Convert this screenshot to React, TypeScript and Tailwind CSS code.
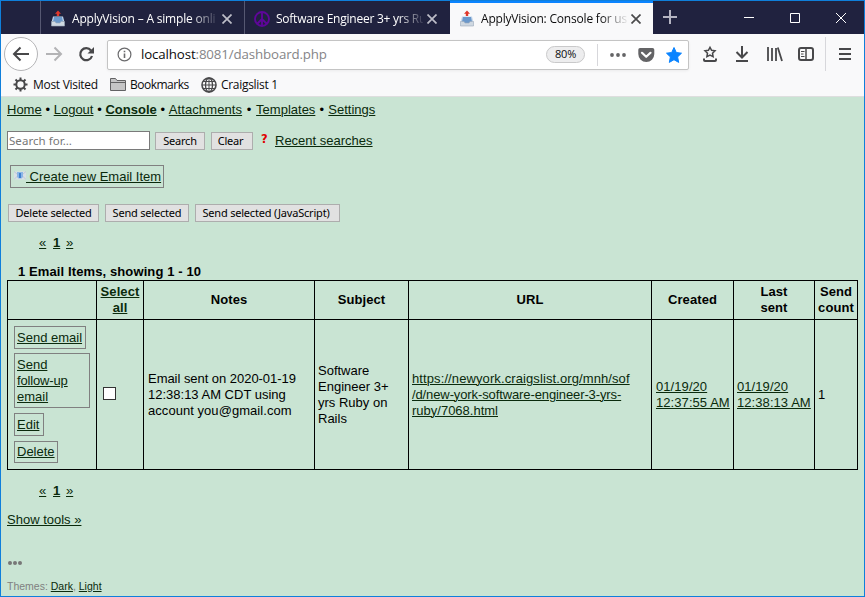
import React from "react";

const UI = "font-['Open_Sans','Noto_Sans',sans-serif]";

function OutboxIcon() {
  return (
    <svg width="14" height="17" viewBox="0 0 14 17" className="shrink-0">
      <path d="M2 6.500h10l1.300 5H.7z" fill="#c3d6ea" />
      <path d="M3 7h8l1 5-2 1.500H4L2 12z" fill="#6a98cb" />
      <path d="M.5 11.500h3.500l1 1.500h4l1-1.500h3.500V16H.5z" fill="#cfd8e1" stroke="#9aa9ba" strokeWidth=".6" />
      <path d="M7 .5l3 3.200H8.200V6H5.800V3.700H4z" fill="#e0372b" />
    </svg>
  );
}

function PeaceIcon() {
  return (
    <svg width="16" height="16" viewBox="0 0 16 16" className="shrink-0" fill="none" stroke="#5e0699" strokeWidth="1.900">
      <circle cx="8" cy="8" r="7" />
      <path d="M8 1v14M8 8l-5 5M8 8l5 5" />
    </svg>
  );
}

function CloseIcon({ color }: { color: string }) {
  return (
    <svg width="10" height="10" viewBox="0 0 10 10" className="shrink-0" stroke={color} strokeWidth="1.700">
      <path d="M.5.5l9 9M9.500.5l-9 9" />
    </svg>
  );
}

function TabBar() {
  return (
    <div className="flex h-[33px] bg-[#20223f] text-[12px] text-white">
      <div className="w-[40px] border-r border-[#565872]" />
      <div className="flex w-[204px] items-center border-r border-[#565872] pt-0.5 pl-[10px]">
        <OutboxIcon />
        <span className="ml-[7px] w-[146px] whitespace-nowrap tracking-[-0.19px] [mask-image:linear-gradient(to_right,black_118px,transparent_148px)]">ApplyVision – A simple onli</span>
        <span className="ml-[4px]"><CloseIcon color="#bdbdc8" /></span>
      </div>
      <div className="flex w-[205px] items-center pt-0.5 pl-[9px]">
        <PeaceIcon />
        <span className="ml-[6px] w-[147px] whitespace-nowrap tracking-[-0.24px] [mask-image:linear-gradient(to_right,black_122px,transparent_150px)]">Software Engineer 3+ yrs Ru</span>
        <span className="ml-[4px]"><CloseIcon color="#bdbdc8" /></span>
      </div>
      <div className="flex w-[203px] items-center border-t-2 border-[#0a84ff] bg-[#f9f9fa] pl-[10px] text-[#0c0c0d]">
        <OutboxIcon />
        <span className="ml-[7px] w-[146px] whitespace-nowrap tracking-[-0.2px] [mask-image:linear-gradient(to_right,black_120px,transparent_148px)]">ApplyVision: Console for us</span>
        <span className="ml-[4px]"><CloseIcon color="#4a4a4b" /></span>
      </div>
      <svg width="211" height="33" viewBox="653 1 211 33" fill="none" stroke="#fff">
        <path d="M663 17h14M670 10v14" stroke="#b5b5c2" strokeWidth="2" />
        <path d="M744 17.500h10" />
        <path d="M790.500 13.500h9v9h-9z" />
        <path d="M836 13l10 10M846 13l-10 10" />
      </svg>
    </div>
  );
}

function Toolbar() {
  return (
    <div className="flex h-[41px] items-center bg-[#f9f9fa]">
      <svg width="106" height="41" viewBox="1 34 106 41" fill="none" stroke="#48484a" strokeWidth="2">
        <circle cx="21" cy="54" r="16.500" fill="#fff" stroke="#b5b5b7" strokeWidth="1" />
        <path d="M29 54H14M20.500 47.500L14 54l6.500 6.500" />
        <path d="M46 54h15M54.500 47.500L61 54l-6.500 6.500" stroke="#b3b3b5" />
        <path d="M91 50.500A6 6 0 1 0 92 56" strokeWidth="2.200" />
        <path d="M94 47v6.500h-6.500z" fill="#48484a" stroke="none" />
      </svg>
      <div className="flex h-[30px] w-[582px] items-center rounded-[2px] border border-[#c4c4c4] bg-white shadow-[0_1px_3px_rgba(0,0,0,0.06)]">
        <svg width="15" height="15" viewBox="0 0 15 15" className="ml-[9px]" fill="none" stroke="#6b6b6d">
          <circle cx="7.500" cy="7.500" r="6.400" strokeWidth="1.200" />
          <path d="M7.500 6.500v4.500M7.500 3.700v1.600" strokeWidth="1.600" />
        </svg>
        <span className="ml-[9px] w-[405px] pt-px text-[13.300px] tracking-[-0.13px] whitespace-nowrap text-[#0c0c0d]">
          localhost<span className="text-[#858587]">:8081/dashboard.php</span>
        </span>
        <span className="flex h-[17px] w-[39px] items-center justify-center rounded-full border border-[#c9c9ca] bg-[#ededee] text-[11px] tracking-[-0.2px] text-[#0c0c0d]">80%</span>
        <svg width="103" height="28" viewBox="585 40 103 28">
          <path d="M597.500 43v22" stroke="#d7d7db" />
          <g fill="#646466">
            <circle cx="612" cy="54" r="1.900" /><circle cx="618" cy="54" r="1.900" /><circle cx="624" cy="54" r="1.900" />
            <path d="M640 47h12.500a1.800 1.800 0 0 1 1.800 1.800V53a8 8 0 0 1-16 0v-4.200A1.800 1.800 0 0 1 640 47z" />
          </g>
          <path d="M642 51.800l4.200 4 4.300-4" fill="none" stroke="#fff" strokeWidth="2.200" strokeLinecap="round" strokeLinejoin="round" />
          <path d="M674 46.500l2.300 5 5.200.7-3.900 3.700 1.100 5.500-4.700-2.700-4.700 2.700 1.100-5.500-3.900-3.700 5.200-.7z" fill="#0a84ff" stroke="#0a84ff" strokeLinejoin="round" />
        </svg>
      </div>
      <svg width="175" height="41" viewBox="689 34 175 41" fill="none" stroke="#48484a" strokeWidth="2">
        <path d="M710 47.300l1.600 3 3.400.5-2.500 2.400.6 3.400-3.100-1.600-3.100 1.600.6-3.400-2.500-2.400 3.400-.5z" strokeWidth="1.500" />
        <path d="M704 58.500v1.500q0 1 1 1h10q1 0 1-1v-1.500" />
        <path d="M742 46v11M736.500 52l5.500 5.500 5.500-5.500M736 61h12" />
        <path d="M768 47v14M772 48v13M776 48v13M777.800 47.500L782 61" strokeWidth="1.800" />
        <rect x="799" y="48" width="14" height="12" rx="2" />
        <path d="M806 48v12" strokeWidth="1.500" /><path d="M801 51.500h3.500M801 54h2.500M801 56.500h3.500" strokeWidth="1" />
        <path d="M825.500 37v34" stroke="#d7d7db" strokeWidth="1" />
        <path d="M839 49h12M839 54h12M839 59h12" />
      </svg>
    </div>
  );
}

function BookmarksBar() {
  return (
    <div className="flex h-[22px] items-center border-b border-[#dedede] bg-[#f9f9fa] pb-0.5 pl-[12px] text-[12px] text-[#0c0c0d]">
      <svg width="15" height="15" viewBox="-7.500 -7.500 15 15" fill="none" stroke="#48484a">
        <circle r="4.200" strokeWidth="2" />
        <path d="M0-7v3M0 7v-3M-7 0h3M7 0h-3M-5-5l2 2M5-5L3-3M-5 5l2-2M5 5L3 3" strokeWidth="2" />
      </svg>
      <span className="ml-[5px] w-[65px] tracking-[-0.3px] whitespace-nowrap">Most Visited</span>
      <svg width="17" height="15" viewBox="0 0 17 15" className="ml-[12px]" fill="#c5c5c6" stroke="#626264">
        <path d="M.5 13.500v-12h5l1.500 2h8.500v10z" /><path d="M.5 5.500h15" />
      </svg>
      <span className="ml-[3px] w-[60px] tracking-[-0.5px] whitespace-nowrap">Bookmarks</span>
      <svg width="16" height="16" viewBox="0 0 16 16" className="ml-[11px]" fill="none" stroke="#48484a" strokeWidth="1.300">
        <circle cx="8" cy="8" r="7" strokeWidth="1.600" /><ellipse cx="8" cy="8" rx="3.500" ry="7" />
        <path d="M1 8h14M2 4.500h12M2 11.500h12M8 1v14" strokeWidth="1" />
      </svg>
      <span className="ml-[4px] tracking-[-0.3px] whitespace-nowrap">Craigslist 1</span>
    </div>
  );
}

function A({ children, className = "" }: { children: React.ReactNode; className?: string }) {
  return <a className={"text-[#0a2a0c] underline decoration-1 underline-offset-1 " + className}>{children}</a>;
}

function Dot({ className = "w-[12px]" }: { className?: string }) {
  return <span className={"text-center " + className}>•</span>;
}

function Btn({ children, className }: { children: React.ReactNode; className: string }) {
  return (
    <button className={"flex h-[18px] items-center justify-center border border-[#adadad] bg-[#e1e1e1] font-['Noto_Sans',sans-serif] text-[11px] tracking-[-0.2px] whitespace-nowrap text-black " + className}>
      {children}
    </button>
  );
}

function Pager() {
  return (
    <div className="flex h-4 pl-[32px]">
      <A className="w-[7px]">«</A>
      <A className="ml-[7px] w-[7px] font-bold">1</A>
      <A className="ml-[6px]">»</A>
    </div>
  );
}

function Th({ children }: { children?: React.ReactNode }) {
  return <div className="flex items-center justify-center border-r border-b border-black text-center font-bold tracking-[0.08px]">{children}</div>;
}

function Td({ children, className = "pl-[3px]" }: { children: React.ReactNode; className?: string }) {
  return <div className={"flex items-center border-r border-b border-black whitespace-nowrap " + className}>{children}</div>;
}

function Action({ children, className }: { children: React.ReactNode; className: string }) {
  return <div className={"border border-[#808080] px-[2px] " + className}><A>{children}</A></div>;
}

function EmailTable() {
  return (
    <div className="grid w-[851px] grid-cols-[89px_47px_171px_94px_243px_82px_81px_43px] grid-rows-[39px_150px] border-t border-l border-black">
      <Th />
      <Th><A>Select<br />all</A></Th>
      <Th>Notes</Th>
      <Th>Subject</Th>
      <Th>URL</Th>
      <Th>Created</Th>
      <Th>Last<br />sent</Th>
      <Th>Send<br />count</Th>
      <div className="flex flex-col items-start border-r border-b border-black pt-[6px] pl-[6px]">
        <Action className="h-[23px] w-[72px] pt-[3px]">Send email</Action>
        <Action className="mt-[4px] h-[55px] w-[76px] pt-[3px]">Send<br /><span className="tracking-[-0.15px]">follow-up</span><br />email</Action>
        <Action className="mt-[5px] h-[23px] w-[30px] pt-[3px]">Edit</Action>
        <Action className="mt-[5px] h-[22px] w-[44px] pt-[2px]">Delete</Action>
      </div>
      <div className="flex items-center border-r border-b border-black pb-[3px] pl-[6px]">
        <span className="size-[13px] border border-[#333] bg-white" />
      </div>
      <Td className="pl-[4px]"><span><span className="tracking-[-0.04px]">Email sent on 2020-01-19</span><br />12:38:13 AM CDT using<br /><span className="tracking-[0.05px]">account you@gmail.com</span></span></Td>
      <Td><span>Software<br />Engineer 3+<br />yrs Ruby on<br />Rails</span></Td>
      <Td>
        <A>
          <span className="tracking-[0.1px]">https://newyork.craigslist.org/mnh/sof</span><br />
          <span className="tracking-[-0.11px]">/d/new-york-software-engineer-3-yrs-</span><br />
          ruby/7068.html
        </A>
      </Td>
      <Td><A className="ml-px tracking-[0.07px]">01/19/20<br />12:37:55 AM</A></Td>
      <Td><A className="tracking-[0.07px]">01/19/20<br />12:38:13 AM</A></Td>
      <Td>1</Td>
    </div>
  );
}

export default function App() {
  return (
    <div className="h-[597px] w-[865px] overflow-hidden border border-[#0f7fdb] bg-[#c9e4d3]">
      <div className={UI}>
        <TabBar />
        <Toolbar />
        <BookmarksBar />
      </div>
      <div className="pt-[5px] pl-[6px] font-['Liberation_Sans',Arial,sans-serif] text-[13px] leading-4 text-black">
        <nav className="flex h-4">
          <A>Home</A><Dot /><A>Logout</A><Dot /><A className="font-bold">Console</A><Dot />
          <A className="tracking-[0.1px]">Attachments</A><Dot className="w-[14px]" /><A>Templates</A><Dot className="w-[13px]" /><A>Settings</A>
        </nav>
        <div className="mt-[13px] flex h-[19px] items-center">
          <div className="flex h-[19px] w-[143px] items-center border border-[#7a7a7a] bg-white pl-px font-['Noto_Sans',sans-serif] text-[11.500px] tracking-[0.05px] text-[#777]">Search for…</div>
          <Btn className="ml-[5px] w-[50px]">Search</Btn>
          <Btn className="ml-[6px] w-[42px] pr-[3px]">Clear</Btn>
          <span className="ml-[8px] w-[7px] pb-[3px] font-['DejaVu_Sans',sans-serif] text-[11.500px] font-bold text-[#e00000]">?</span>
          <A className="ml-[7px]">Recent searches</A>
        </div>
        <div className="mt-[15px] ml-[3px] flex h-[23px] w-[154px] items-start border border-[#808080] pt-[3px] pl-[3px] whitespace-pre">
          <svg width="12" height="9" viewBox="0 0 12 9" className="mt-[2px] shrink-0">
            <path d="M0 .5h12v8H0z" fill="#d9e0e6" /><path d="M0 .5l6 5 6-5M0 8.500l4-4M12 8.500l-4-4" stroke="#b0bac6" fill="none" strokeWidth=".6" />
            <path d="M3 1h6v5L7.500 7.500h-3L3 6z" fill="#8bb6e6" /><path d="M5 2h2v5H5z" fill="#3f7fd0" />
          </svg>
          <A> Create new Email Item</A>
        </div>
        <div className="mt-[16px] flex pl-px">
          <Btn className="w-[91px]">Delete selected</Btn>
          <Btn className="ml-[6px] w-[84px]">Send selected</Btn>
          <Btn className="ml-[6px] w-[145px] pr-[3px]">Send selected (JavaScript)</Btn>
        </div>
        <div className="mt-[13px]"><Pager /></div>
        <div className="mt-[13px] h-4 pl-[11px] font-bold tracking-[0.11px]">1 Email Items, showing 1 - 10</div>
        <EmailTable />
        <div className="mt-[13px]"><Pager /></div>
        <div className="mt-[13px] h-4"><A>Show tools »</A></div>
        <div className="mt-[33px] flex h-[4px] items-center gap-px pl-px">
          <span className="size-[4px] rounded-full bg-[#777]" />
          <span className="size-[4px] rounded-full bg-[#777]" />
          <span className="size-[4px] rounded-full bg-[#777]" />
        </div>
        <div className="mt-[13px] text-[10.500px] text-[#808080]">Themes: <A>Dark</A>, <A>Light</A></div>
      </div>
    </div>
  );
}
